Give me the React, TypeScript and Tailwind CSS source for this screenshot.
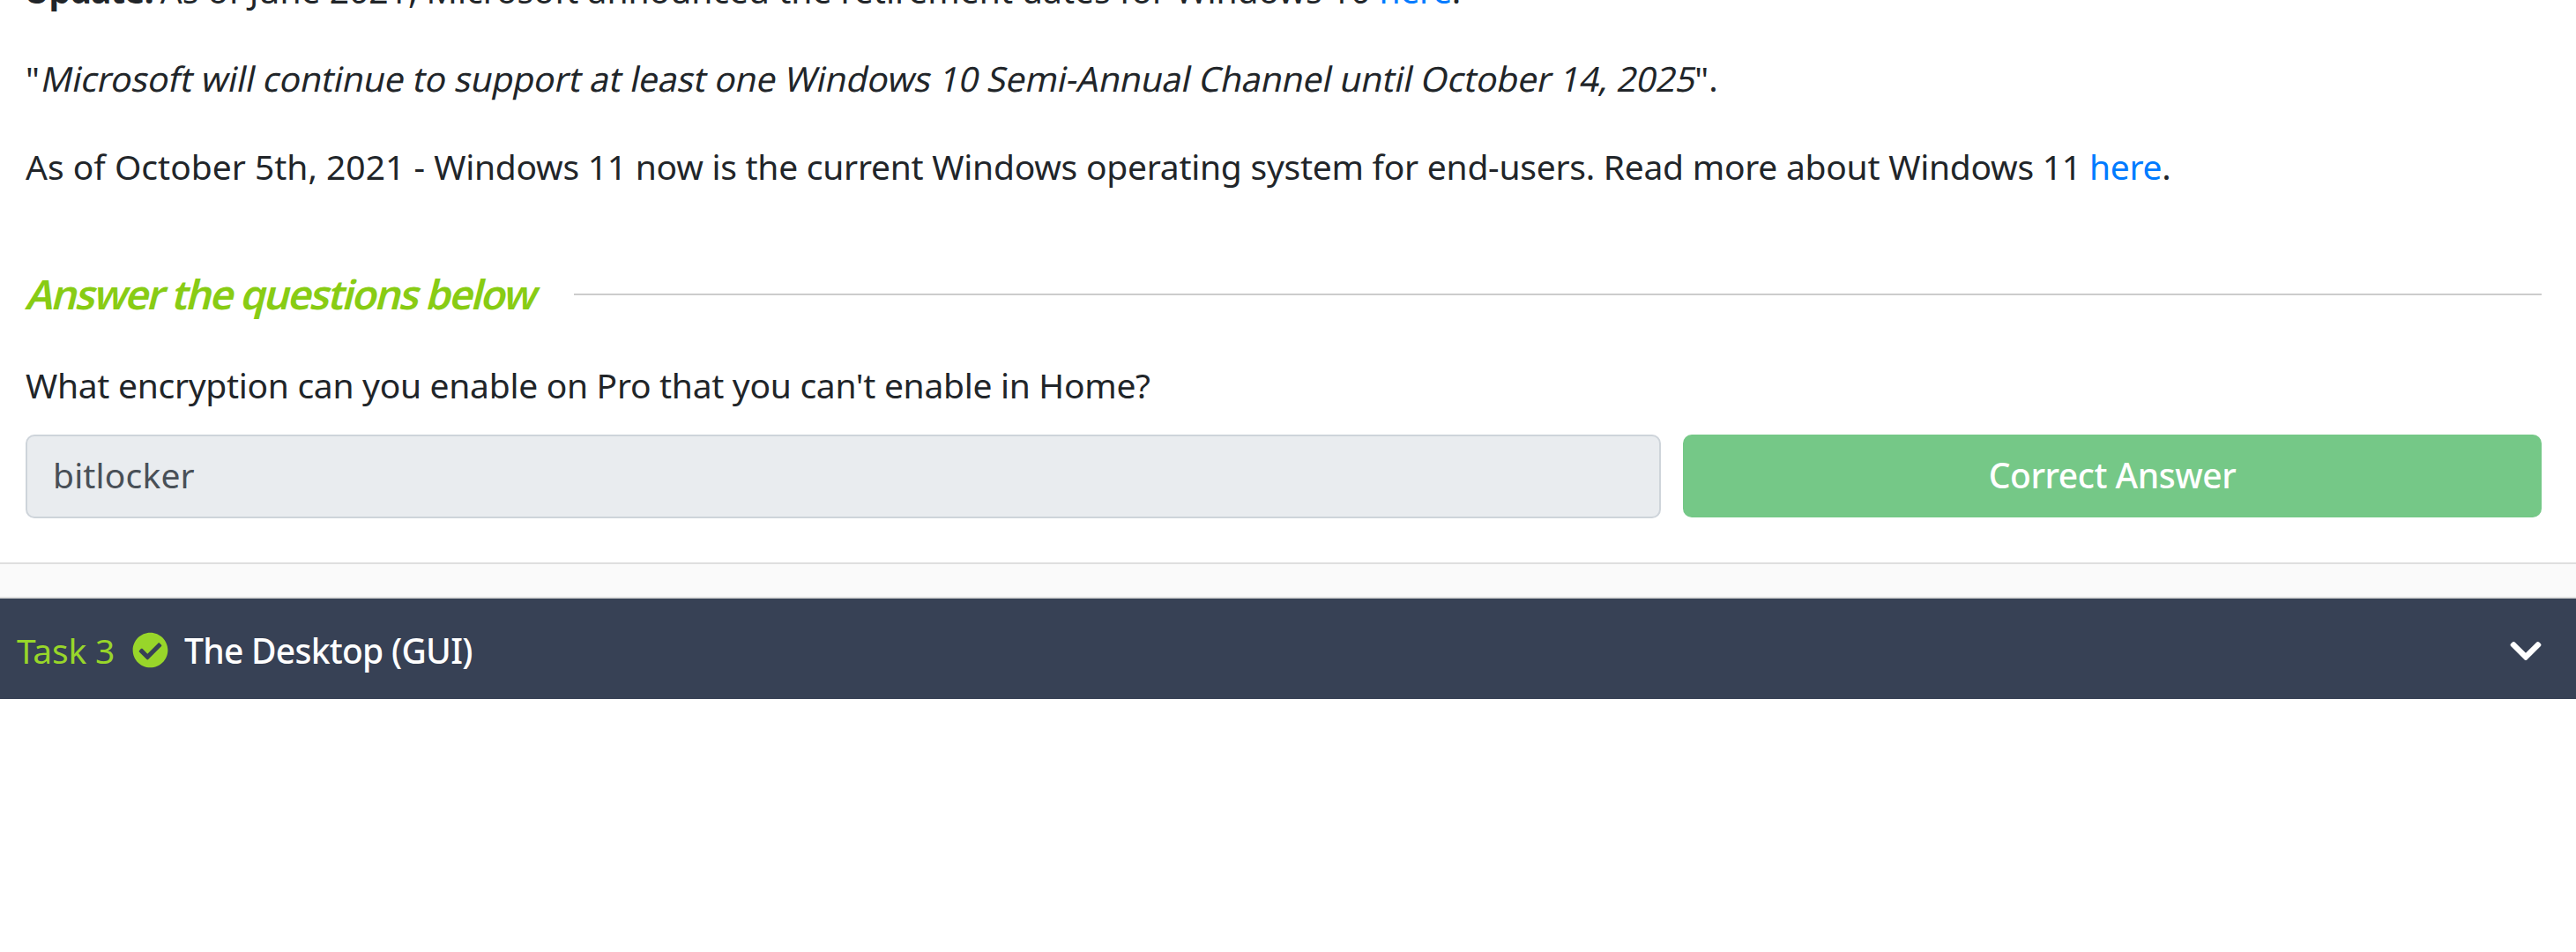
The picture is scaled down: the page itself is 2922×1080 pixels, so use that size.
import { FaCheckCircle, FaChevronDown } from "react-icons/fa";

function TaskBody() {
  return (
    <section className="-mt-[41px] h-[681px] border-b-2 border-[#dfdfdf] bg-white pl-[29px] pr-[39px] text-[39px] leading-[60px] text-[#212529]">
      <div className="whitespace-nowrap">
        <p className="mb-10">
          <b className="-ml-[2px] -mr-[2px] tracking-[-0.95px]">Update:</b> As of June 2021, Microsoft announced the
          retirement dates for Windows 10{" "}
          <a className="tracking-[-0.3px] text-[#007bff]">here</a>.
        </p>
        <p className="mb-10 flex">
          "
          <em className="inline-block origin-[0_75%] -skew-x-12 not-italic tracking-[-0.14px]">
            Microsoft will continue to support at least one Windows 10 Semi-Annual Channel until October 14, 2025
          </em>
          <span className="ml-[1px]">".</span>
        </p>
        <p>
          As of October 5th, 2021 -{" "}
          <span className="tracking-[-0.26px]">
            Windows 11 now is the current Windows operating system for end-users. Read more about Windows 11
          </span>{" "}
          <a className="-ml-[1px] tracking-[-0.3px] text-[#007bff]">here</a>.
        </p>
      </div>

      <div className="mt-[84px] flex items-center">
        <h2 className="w-[622px] shrink-0 whitespace-nowrap text-[46px] font-semibold leading-[60px] tracking-[-2.15px] text-[#88cc14]">
          <span className="-ml-[1px] inline-block origin-[0_80%] -skew-x-14">Answer the questions below</span>
        </h2>
        <div className="mt-[2px] h-[2px] flex-1 bg-[#cccccc]" />
      </div>

      <p className="mt-[44px] tracking-[-0.3px]">What encryption can you enable on Pro that you can't enable in Home?</p>

      <div className="mt-[26px] flex items-start justify-between">
        <div className="flex h-[95px] w-[1855px] items-center rounded-[10px] border-2 border-[#ced4da] bg-[#e9ecef] pb-1 pl-[29px] tracking-[0.15px] text-[#495057]">
          bitlocker
        </div>
        <button className="flex h-[94px] w-[974px] items-center justify-center rounded-[10px] bg-[#75c887] pb-[3px] font-medium tracking-[-0.45px] text-white">
          Correct Answer
        </button>
      </div>
    </section>
  );
}

function TaskHeader() {
  return (
    <header className="flex h-[114px] items-center bg-[#374155] pl-[19px] pr-[39px] pt-1 text-[39px] leading-[60px]">
      <span className="w-[131px] tracking-[-0.2px] text-[#98d62a]">Task 3</span>
      <FaCheckCircle className="-mt-[2px] size-[41px] text-[#98d62a]" />
      <span className="ml-[18px] flex-1 font-medium tracking-[-0.72px] text-white">The Desktop (GUI)</span>
      <FaChevronDown className="h-[41px] w-[36px] text-white" />
    </header>
  );
}

export default function App() {
  return (
    <main className="flow-root h-[1080px] overflow-hidden bg-white font-['Noto_Sans',sans-serif]">
      <TaskBody />
      <div className="h-[39px] border-b-2 border-[#dfdfdf] bg-[#fafafa]" />
      <TaskHeader />
    </main>
  );
}
